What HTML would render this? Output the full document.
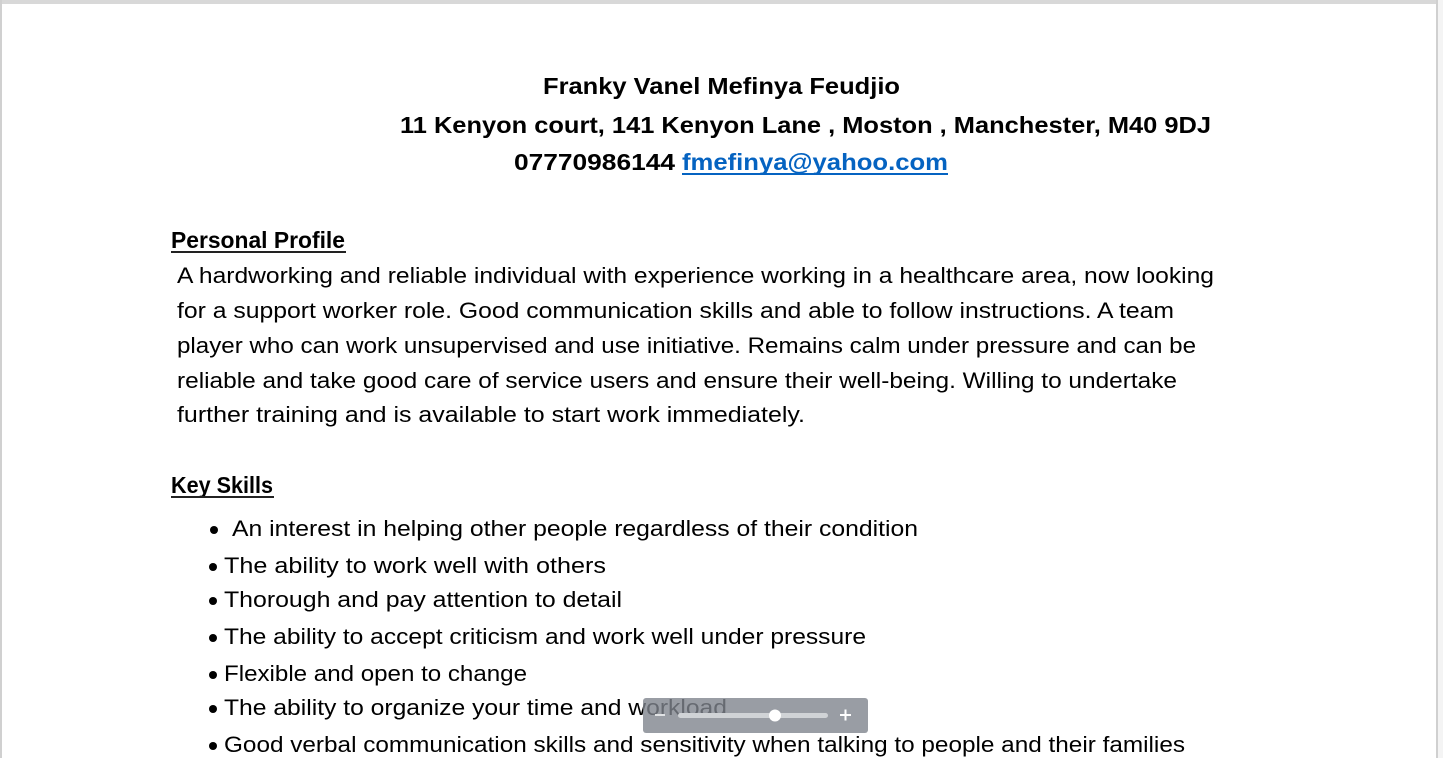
<!DOCTYPE html>
<html><head><meta charset="utf-8"><style>
html,body{margin:0;padding:0;background:#fff;width:1443px;height:758px;overflow:hidden}
svg{display:block}
text{font-family:"Liberation Sans",sans-serif;fill:#000}
.b{font-weight:bold;font-size:23px}
.t{font-size:22.5px}
</style></head><body>
<svg width="1443" height="758" xmlns="http://www.w3.org/2000/svg">
<rect x="0" y="0" width="1443" height="758" fill="#fff"/>
<rect x="0" y="0" width="1443" height="4" fill="#d8d8d8"/>
<rect x="0" y="0" width="2" height="758" fill="#d0d0d0"/>
<rect x="1436" y="0" width="2" height="758" fill="#d0d0d0"/>
<rect x="1438" y="0" width="5" height="758" fill="#f4f4f4"/>

<text class="b" x="543" y="94" textLength="357" lengthAdjust="spacingAndGlyphs">Franky Vanel Mefinya Feudjio</text>
<text class="b" x="400" y="133" textLength="811" lengthAdjust="spacingAndGlyphs">11 Kenyon court, 141 Kenyon Lane , Moston , Manchester, M40 9DJ</text>
<text class="b" x="514" y="170" textLength="161" lengthAdjust="spacingAndGlyphs">07770986144</text>
<text class="b" x="682" y="170" textLength="266" lengthAdjust="spacingAndGlyphs" style="fill:#0563c1">fmefinya@yahoo.com</text>
<rect x="682" y="173" width="266" height="2" fill="#0563c1"/>

<text class="b" x="171" y="248" textLength="174" lengthAdjust="spacingAndGlyphs">Personal Profile</text>
<rect x="171" y="251" width="175" height="2" fill="#222"/>

<text class="t" x="177" y="283" textLength="1037" lengthAdjust="spacingAndGlyphs">A hardworking and reliable individual with experience working in a healthcare area, now looking</text>
<text class="t" x="177" y="318" textLength="997" lengthAdjust="spacingAndGlyphs">for a support worker role. Good communication skills and able to follow instructions. A team</text>
<text class="t" x="177" y="353" textLength="1019" lengthAdjust="spacingAndGlyphs">player who can work unsupervised and use initiative. Remains calm under pressure and can be</text>
<text class="t" x="177" y="388" textLength="1000" lengthAdjust="spacingAndGlyphs">reliable and take good care of service users and ensure their well-being. Willing to undertake</text>
<text class="t" x="177" y="422" textLength="628" lengthAdjust="spacingAndGlyphs">further training and is available to start work immediately.</text>

<text class="b" x="171" y="493" textLength="102" lengthAdjust="spacingAndGlyphs">Key Skills</text>
<rect x="171" y="496" width="103" height="2" fill="#222"/>

<g fill="#000">
<circle cx="214" cy="530" r="4"/>
<circle cx="213" cy="567" r="4"/>
<circle cx="213" cy="601" r="4"/>
<circle cx="213" cy="638" r="4"/>
<circle cx="213" cy="675" r="4"/>
<circle cx="213" cy="709" r="4"/>
<circle cx="213" cy="746" r="4"/>
</g>
<text class="t" x="232" y="536" textLength="686" lengthAdjust="spacingAndGlyphs">An interest in helping other people regardless of their condition</text>
<text class="t" x="224" y="573" textLength="382" lengthAdjust="spacingAndGlyphs">The ability to work well with others</text>
<text class="t" x="224" y="607" textLength="398" lengthAdjust="spacingAndGlyphs">Thorough and pay attention to detail</text>
<text class="t" x="224" y="644" textLength="642" lengthAdjust="spacingAndGlyphs">The ability to accept criticism and work well under pressure</text>
<text class="t" x="224" y="681" textLength="303" lengthAdjust="spacingAndGlyphs">Flexible and open to change</text>
<text class="t" x="224" y="715" textLength="503" lengthAdjust="spacingAndGlyphs">The ability to organize your time and workload</text>
<text class="t" x="224" y="752" textLength="961" lengthAdjust="spacingAndGlyphs">Good verbal communication skills and sensitivity when talking to people and their families</text>

<rect x="643" y="698" width="225" height="35" rx="3" fill="#7f858d" fill-opacity="0.8"/>
<rect x="655" y="714" width="10" height="2" fill="#e0e2e4"/>
<rect x="678" y="713" width="150" height="5" rx="2.5" fill="#d0d3d6"/>
<circle cx="775" cy="715.5" r="6" fill="#fff"/>
<rect x="840" y="714" width="11" height="2" fill="#fff"/>
<rect x="844.5" y="709.5" width="2" height="11" fill="#fff"/>
</svg>
</body></html>
